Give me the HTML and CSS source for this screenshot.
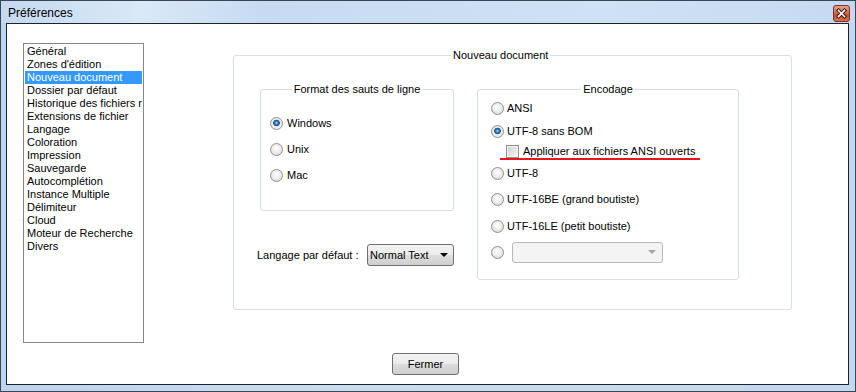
FILE: index.html
```html
<!DOCTYPE html>
<html lang="fr">
<head>
    <meta charset="UTF-8">
    <title>Préférences</title>
    <link rel="stylesheet" href="styles.css">
</head>
<body>
    <div class="window">
        <div class="titlebar">
            <span class="title">Préférences</span>
            <span class="close-btn">
                <svg width="17" height="17" viewBox="0 0 17 17">
                    <defs>
                        <linearGradient id="cg" x1="0" y1="0" x2="0" y2="1">
                            <stop offset="0" stop-color="#eaa48e"/>
                            <stop offset="0.5" stop-color="#d5664b"/>
                            <stop offset="0.55" stop-color="#c8482c"/>
                            <stop offset="1" stop-color="#dd7555"/>
                        </linearGradient>
                    </defs>
                    <rect x="0.5" y="0.5" width="16" height="16" rx="2.5" fill="url(#cg)" stroke="#7d3528"/>
                    <path d="M5.5 5.5 L11.5 11.5 M11.5 5.5 L5.5 11.5" stroke="#3a1a14" stroke-width="3.6" stroke-linecap="square"/>
                    <path d="M5.5 5.5 L11.5 11.5 M11.5 5.5 L5.5 11.5" stroke="#ffffff" stroke-width="1.6" stroke-linecap="square"/>
                </svg>
            </span>
        </div>
        <div class="client">
            <div class="content">
                <ul class="pages">
                    <li>Général</li>
                    <li>Zones d'édition</li>
                    <li class="selected">Nouveau document</li>
                    <li>Dossier par défaut</li>
                    <li>Historique des fichiers récents</li>
                    <li>Extensions de fichier</li>
                    <li>Langage</li>
                    <li>Coloration</li>
                    <li>Impression</li>
                    <li>Sauvegarde</li>
                    <li>Autocomplétion</li>
                    <li>Instance Multiple</li>
                    <li>Délimiteur</li>
                    <li>Cloud</li>
                    <li>Moteur de Recherche</li>
                    <li>Divers</li>
                </ul>

                <fieldset class="group main-group">
                    <legend class="main-legend">Nouveau document</legend>
                    <div class="cols">
                        <div class="left-col">
                            <fieldset class="group eol-group">
                                <legend>Format des sauts de ligne</legend>
                                <div class="radio-row"><span class="radio checked"></span>Windows</div>
                                <div class="radio-row"><span class="radio"></span>Unix</div>
                                <div class="radio-row"><span class="radio"></span>Mac</div>
                            </fieldset>
                            <div class="lang-row">
                                <span class="lang-label">Langage par défaut :</span>
                                <div class="combo">
                                    <span class="combo-text">Normal Text</span>
                                    <span class="arrow"></span>
                                </div>
                            </div>
                        </div>

                        <fieldset class="group enc-group">
                            <legend>Encodage</legend>
                            <div class="enc-row r-ansi"><span class="radio"></span>ANSI</div>
                            <div class="enc-row r-bom"><span class="radio checked"></span>UTF-8 sans BOM</div>
                            <div class="check-row">
                                <span class="check-line"><span class="check"></span>Appliquer aux fichiers ANSI ouverts</span>
                            </div>
                            <div class="enc-row r-utf8"><span class="radio"></span>UTF-8</div>
                            <div class="enc-row r-be"><span class="radio"></span>UTF-16BE (grand boutiste)</div>
                            <div class="enc-row r-le"><span class="radio"></span>UTF-16LE (petit boutiste)</div>
                            <div class="enc-row r-other">
                                <span class="radio"></span>
                                <div class="combo combo-disabled"><span class="arrow"></span></div>
                            </div>
                        </fieldset>
                    </div>
                </fieldset>
            </div>
            <div class="footer">
                <button class="btn">Fermer</button>
            </div>
        </div>
    </div>
</body>
</html>
```

FILE: styles.css
```css
body {
    margin: 0;
    font-family: "Liberation Sans", Arial, sans-serif;
    font-size: 11px;
    color: #000;
    background: #fff;
}
.window {
    width: 856px;
    height: 392px;
    box-sizing: border-box;
    border: 1px solid #3c4650;
    background: linear-gradient(to right, #bcd4ee, #c9ddf3 40%, #c2d8f0);
}
.titlebar {
    display: flex;
    justify-content: space-between;
    align-items: flex-start;
    height: 22px;
    box-sizing: border-box;
    padding: 4px 5px 0 7px;
    background: linear-gradient(to right, #c3d9f1 0, #dae8f7 140px, #c6dbf2 260px, #cfe1f5 600px, #c5daf1 100%);
}
.title {
    font-size: 12px;
    line-height: 14px;
    padding-top: 1px;
}
.close-btn {
    display: block;
    width: 17px;
    height: 17px;
}
.close-btn svg {
    display: block;
}
.client {
    height: 362px;
    box-sizing: border-box;
    margin: 0 6px 0 5px;
    border: 1px solid #1f2328;
    background: #fff;
}
.content {
    display: flex;
    align-items: flex-start;
    padding: 19px 0 0 16px;
}
.pages {
    list-style: none;
    margin: 0;
    padding: 1px 1px 0;
    width: 121px;
    height: 300px;
    box-sizing: border-box;
    border: 1px solid #828790;
}
.pages li {
    height: 13px;
    line-height: 13px;
    padding-left: 2px;
    white-space: nowrap;
    overflow: hidden;
}
.pages li.selected {
    background: #3399ff;
    color: #fff;
}
.group {
    margin: 0;
    min-width: 0;
    box-sizing: border-box;
    border: 1px solid #d5dfe5;
    border-radius: 3px;
}
.group legend {
    padding: 0 2px;
    line-height: 13px;
    margin: 0 auto;
}
.main-group {
    margin: 6px 0 0 89px;
    width: 559px;
    height: 261px;
    padding: 21px 0 0 26px;
}
.group .main-legend {
    margin: 0 0 0 191px;
}
.cols {
    display: flex;
    align-items: flex-start;
}
.left-col {
    width: 194px;
}
.eol-group {
    width: 194px;
    height: 128px;
    padding: 14px 9px 0 9px;
}
.radio-row {
    display: flex;
    align-items: center;
    gap: 4px;
    height: 26px;
}
.radio {
    flex: none;
    width: 13px;
    height: 13px;
    box-sizing: border-box;
    border: 1px solid #8e8f8f;
    border-radius: 50%;
    background: radial-gradient(circle at 50% 40%, #ffffff 0, #f0f0f0 40%, #d4d4d4 100%);
}
.radio.checked {
    background: radial-gradient(circle at 50% 45%, #b6dcf8 0, #3b84c4 1.5px, #18528a 3px, #e8e8e8 3.6px, #f6f6f6 100%);
}
.lang-row {
    display: flex;
    align-items: center;
    margin: 33px 0 0 -3px;
}
.lang-label {
    width: 110px;
    flex: none;
}
.combo {
    display: flex;
    align-items: center;
    justify-content: space-between;
    width: 90px;
    height: 22px;
    box-sizing: border-box;
    padding: 0 5px 0 2px;
    border: 1px solid #707070;
    border-radius: 3px;
    background: linear-gradient(#f2f2f2 0, #ebebeb 50%, #dddddd 51%, #cfcfcf 100%);
}
.arrow {
    width: 0;
    height: 0;
    border-left: 4px solid transparent;
    border-right: 4px solid transparent;
    border-top: 4px solid #000;
    margin-left: auto;
}
.enc-group {
    margin-left: 23px;
    width: 262px;
    height: 197px;
    padding: 0 13px;
}
.enc-row {
    display: flex;
    align-items: center;
    gap: 3px;
    height: 20px;
}
.r-ansi { margin-top: 2px; }
.r-bom { margin-top: 3px; }
.r-utf8 { margin-top: 3px; }
.r-be { margin-top: 6px; }
.r-le { margin-top: 7px; }
.r-other {
    margin-top: 5px;
    height: 22px;
    gap: 8px;
}
.check-row {
    display: flex;
    height: 19px;
}
.check-line {
    display: flex;
    align-items: flex-end;
    gap: 4px;
    height: 17px;
    margin-left: 9px;
    padding: 0 5px 0 6px;
    border-bottom: 2px solid #e8161c;
    line-height: 13px;
}
.check {
    flex: none;
    width: 13px;
    height: 13px;
    box-sizing: border-box;
    border: 1px solid #8e8f8f;
    box-shadow: inset 0 0 0 1px #f4f4f4;
    background: linear-gradient(135deg, #cfcfcf, #f7f7f7);
}
.combo-disabled {
    width: 151px;
    height: 21px;
    border-color: #b5b9bc;
    background: #f4f4f4;
    padding-right: 6px;
}
.combo-disabled .arrow {
    border-top-color: #a3a3a3;
}
.footer {
    padding: 10px 0 0 385px;
}
.btn {
    display: block;
    width: 67px;
    height: 22px;
    padding: 0;
    font-family: inherit;
    font-size: 11px;
    color: #000;
    border: 1px solid #707070;
    border-radius: 3px;
    background: linear-gradient(#f2f2f2 0, #ebebeb 50%, #dddddd 51%, #cfcfcf 100%);
}
```
